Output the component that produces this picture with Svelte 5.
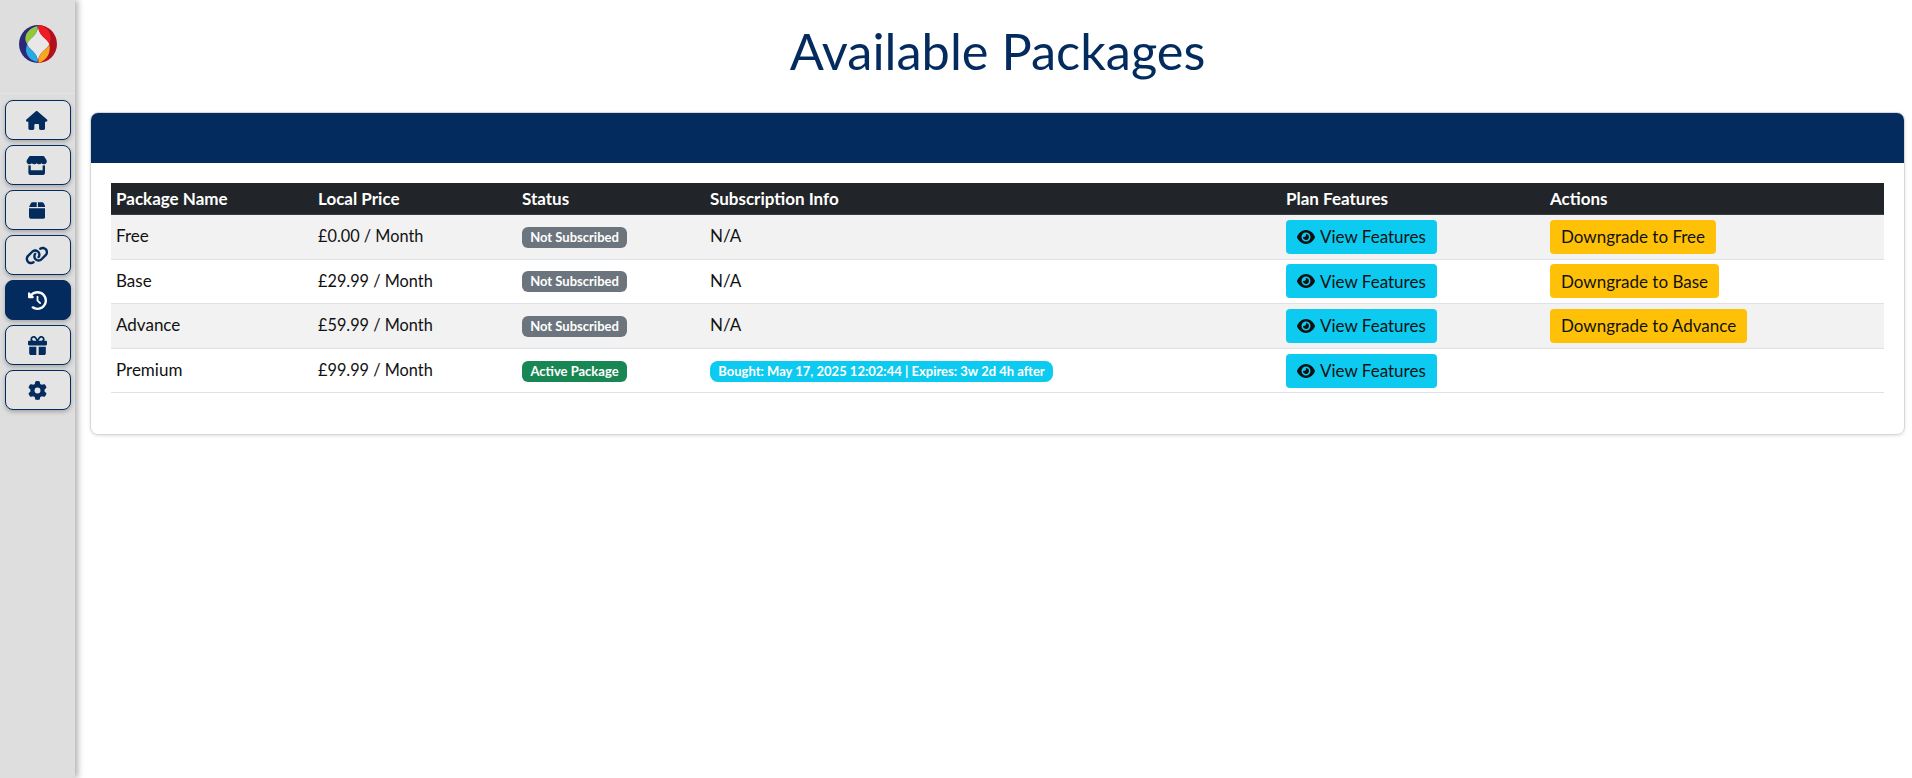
<script>
  const icons = {
    house: { w: 576, d: 'M575.8 255.5c0 18-15 32.1-32 32.1h-32l.7 160.2c0 2.7-.2 5.4-.5 8.1V472c0 22.1-17.9 40-40 40H456c-1.1 0-2.2 0-3.3-.1c-1.4 .1-2.8 .1-4.2 .1H416 392c-22.1 0-40-17.9-40-40V448 384c0-17.7-14.3-32-32-32H256c-17.7 0-32 14.3-32 32v64 24c0 22.1-17.9 40-40 40H160 128.1c-1.5 0-3-.1-4.5-.2c-1.2 .1-2.4 .2-3.6 .2H104c-22.1 0-40-17.9-40-40V360c0-.9 0-1.9 .1-2.8V287.6H32c-18 0-32-14-32-32.1c0-9 3-17 10-24L266.4 8c7-7 15-8 22-8s15 2 21 7L564.8 231.5c8 7 12 15 11 24z' },
    store: { w: 576, d: 'M547.6 103.8L490.3 13.1C485.2 5 476.1 0 466.4 0H109.6C99.9 0 90.8 5 85.7 13.1L28.3 103.8c-29.6 46.8-3.4 111.9 51.9 119.4c4 .5 8.1 .8 12.1 .8c26.1 0 49.3-11.4 65.2-29c15.9 17.6 39.1 29 65.2 29c26.1 0 49.3-11.4 65.2-29c15.9 17.6 39.1 29 65.2 29c26.2 0 49.3-11.4 65.2-29c16 17.6 39.1 29 65.2 29c4.1 0 8.1-.3 12.1-.8c55.5-7.4 81.8-72.5 52.1-119.4zM499.7 254.9l-.1 0c-5.3 .7-10.7 1.1-16.2 1.1c-12.4 0-24.3-1.9-35.4-5.3V384H128V250.6c-11.2 3.5-23.2 5.4-35.6 5.4c-5.5 0-11-.4-16.3-1.1l-.1 0c-4.1-.6-8.1-1.3-12-2.3V384v64c0 35.3 28.7 64 64 64H448c35.3 0 64-28.7 64-64V384 252.6c-4 1-8 1.8-12.3 2.3z' },
    box: { w: 448, d: 'M50.7 58.5L0 160H208V32H93.7C75.5 32 58.9 42.3 50.7 58.5zM240 160H448L397.3 58.5C389.1 42.3 372.5 32 354.3 32H240V160zm208 32H0V416c0 35.3 28.7 64 64 64H384c35.3 0 64-28.7 64-64V192z' },
    link: { w: 640, d: 'M579.8 267.7c56.5-56.5 56.5-148 0-204.5c-50-50-128.8-56.5-186.3-15.4l-1.6 1.1c-14.4 10.3-17.7 30.3-7.4 44.6s30.3 17.7 44.6 7.4l1.6-1.1c32.1-22.9 76-19.3 103.8 8.6c31.5 31.5 31.5 82.5 0 114L422.3 334.8c-31.5 31.5-82.5 31.5-114 0c-27.9-27.9-31.5-71.8-8.6-103.8l1.1-1.6c10.3-14.4 6.9-34.4-7.4-44.6s-34.4-6.9-44.6 7.4l-1.1 1.6C206.5 251.2 213 330 263 380c56.5 56.5 148 56.5 204.5 0L579.8 267.7zM60.2 244.3c-56.5 56.5-56.5 148 0 204.5c50 50 128.8 56.5 186.3 15.4l1.6-1.1c14.4-10.3 17.7-30.3 7.4-44.6s-30.3-17.7-44.6-7.4l-1.6 1.1c-32.1 22.9-76 19.3-103.8-8.6C74 372 74 321 105.5 289.5L217.7 177.2c31.5-31.5 82.5-31.5 114 0c27.9 27.9 31.5 71.8 8.6 103.9l-1.1 1.6c-10.3 14.4-6.9 34.4 7.4 44.6s34.4 6.9 44.6-7.4l1.1-1.6C433.5 260.8 427 182 377 132c-56.5-56.5-148-56.5-204.5 0L60.2 244.3z' },
    history: { w: 512, d: 'M75 75L41 41C25.9 25.9 0 36.6 0 57.9V168c0 13.3 10.7 24 24 24H134.1c21.4 0 32.1-25.9 17-41l-30.8-30.8C155 85.5 203 64 256 64c106 0 192 86 192 192s-86 192-192 192c-40.8 0-78.6-12.7-109.7-34.4c-14.5-10.1-34.4-6.6-44.6 7.9s-6.6 34.4 7.9 44.6C151.2 495 201.7 512 256 512c141.4 0 256-114.6 256-256S397.4 0 256 0C185.3 0 121.3 28.7 75 75zm181 53c-13.3 0-24 10.7-24 24V256c0 6.4 2.5 12.5 7 17l72 72c9.4 9.4 24.6 9.4 33.9 0s9.4-24.6 0-33.9l-65-65V152c0-13.3-10.7-24-24-24z' },
    gift: { w: 512, d: 'M190.5 68.8L225.3 128H224 152c-22.1 0-40-17.9-40-40s17.9-40 40-40h2.2c14.9 0 28.8 7.9 36.3 20.8zM64 88c0 14.4 3.5 28 9.6 40H32c-17.7 0-32 14.3-32 32v64c0 17.7 14.3 32 32 32H480c17.7 0 32-14.3 32-32V160c0-17.7-14.3-32-32-32H438.4c6.1-12 9.6-25.6 9.6-40c0-48.6-39.4-88-88-88h-2.2c-31.9 0-61.5 16.9-77.7 44.4L256 85.5l-24.1-41C215.7 16.9 186.1 0 154.2 0H152C103.4 0 64 39.4 64 88zm336 0c0 22.1-17.9 40-40 40H288h-1.3l34.8-59.2C329.1 55.9 342.9 48 357.8 48H360c22.1 0 40 17.9 40 40zM32 288V464c0 26.5 21.5 48 48 48H224V288H32zM288 512H432c26.5 0 48-21.5 48-48V288H288V512z' },
    gear: { w: 512, d: 'M495.9 166.6c3.2 8.7 .5 18.4-6.4 24.6l-43.3 39.4c1.1 8.3 1.7 16.8 1.7 25.4s-.6 17.1-1.7 25.4l43.3 39.4c6.9 6.2 9.6 15.9 6.4 24.6c-4.4 11.9-9.7 23.3-15.8 34.3l-4.7 8.1c-6.6 11-14 21.4-22.1 31.2c-5.9 7.2-15.7 9.6-24.5 6.8l-55.7-17.7c-13.4 10.3-28.2 18.9-44 25.4l-12.5 57.1c-2 9.1-9 16.3-18.2 17.8c-13.8 2.3-28 3.5-42.5 3.5s-28.7-1.2-42.5-3.5c-9.2-1.5-16.2-8.7-18.2-17.8l-12.5-57.1c-15.8-6.5-30.6-15.1-44-25.4L83.1 425.9c-8.8 2.8-18.6 .3-24.5-6.8c-8.1-9.8-15.5-20.2-22.1-31.2l-4.7-8.1c-6.1-11-11.4-22.4-15.8-34.3c-3.2-8.7-.5-18.4 6.4-24.6l43.3-39.4C64.6 273.1 64 264.6 64 256s.6-17.1 1.7-25.4L22.4 191.2c-6.9-6.2-9.6-15.9-6.4-24.6c4.4-11.9 9.7-23.3 15.8-34.3l4.7-8.1c6.6-11 14-21.4 22.1-31.2c5.9-7.2 15.7-9.6 24.5-6.8l55.7 17.7c13.4-10.3 28.2-18.9 44-25.4l12.5-57.1c2-9.1 9-16.3 18.2-17.8C227.3 1.2 241.5 0 256 0s28.7 1.2 42.5 3.5c9.2 1.5 16.2 8.7 18.2 17.8l12.5 57.1c15.8 6.5 30.6 15.1 44 25.4l55.7-17.7c8.8-2.8 18.6-.3 24.5 6.8c8.1 9.8 15.5 20.2 22.1 31.2l4.7 8.1c6.1 11 11.4 22.4 15.8 34.3zM256 336a80 80 0 1 0 0-160 80 80 0 1 0 0 160z' },
  };
  const eye = 'M288 32c-80.8 0-145.5 36.8-192.6 80.6C48.6 156 17.3 208 2.5 243.7c-3.3 7.9-3.3 16.7 0 24.6C17.3 304 48.6 356 95.4 399.4C142.5 443.2 207.2 480 288 480s145.5-36.8 192.6-80.6c46.8-43.5 78.1-95.4 92.9-131.1c3.3-7.9 3.3-16.7 0-24.6c-14.8-35.7-46.1-87.7-92.9-131.1C433.5 68.8 368.8 32 288 32zM144 256a144 144 0 1 1 288 0 144 144 0 1 1 -288 0zm144-64c0 35.3-28.7 64-64 64c-7.1 0-13.9-1.2-20.3-3.3c-5.5-1.8-11.9 1.6-11.7 7.4c.3 6.9 1.3 13.8 3.2 20.7c13.7 51.2 66.4 81.6 117.6 67.9s81.6-66.4 67.9-117.6c-11.1-41.5-47.8-69.4-88.6-71.1c-5.8-.2-9.2 6.1-7.4 11.7c2.1 6.4 3.3 13.2 3.3 20.3z';

  const nav = ['house', 'store', 'box', 'link', 'history', 'gift', 'gear'];

  const plans = [
    { name: 'Free', price: '£0.00 / Month', action: 'Downgrade to Free' },
    { name: 'Base', price: '£29.99 / Month', action: 'Downgrade to Base' },
    { name: 'Advance', price: '£59.99 / Month', action: 'Downgrade to Advance' },
    { name: 'Premium', price: '£99.99 / Month', active: true, info: 'Bought: May 17, 2025 12:02:44 | Expires: 3w 2d 4h after' },
  ];
</script>

<div class="layout">
  <aside class="sidebar">
    <div class="brand">
      <svg width="38" height="38" viewBox="0 0 40 40" aria-label="logo">
        <defs><clipPath id="disc"><circle cx="20" cy="20" r="20"/></clipPath></defs>
        <g clip-path="url(#disc)">
          <rect width="20" height="40" fill="#2b2a78"/>
          <rect x="20" width="20" height="40" fill="#b3101e"/>
          <path d="M20 0C20 12 11 13 8.5 20C11 27 20 28 20 40C20 28 29 27 32 20C29 13 20 12 20 0Z" fill="#e8e8e8"/>
          <path d="M19.4 1C20 12 11 13 8.5 20C4 13 8 4 19.4 1Z" fill="#93c83d"/>
          <path d="M19.4 39C20 28 11 27 8.5 20.5C5 29 10 37 19.4 39Z" fill="#29abe2"/>
          <path d="M20.6 0C20 12 29 13 32 20C36 11 31 2 20.6 0Z" fill="#ed1c24"/>
          <path d="M20.6 40C20 28 29 27 32 20.5C33.5 29 30 37 20.6 40Z" fill="#f7a823"/>
        </g>
      </svg>
    </div>
    <nav class="nav">
      {#each nav as name}
        <button class="nav-btn" class:active={name === 'history'} aria-label={name}>
          <svg class="nav-icon" viewBox="0 0 {icons[name].w} 512"><path d={icons[name].d}/></svg>
        </button>
      {/each}
    </nav>
  </aside>

  <main class="content">
    <h1>Available Packages</h1>
    <section class="card">
      <div class="card-head"></div>
      <div class="card-body">
        <table>
          <colgroup>
            <col class="c1"/><col class="c2"/><col class="c3"/><col class="c4"/><col class="c5"/><col class="c6"/>
          </colgroup>
          <thead>
            <tr>
              <th>Package Name</th>
              <th>Local Price</th>
              <th>Status</th>
              <th>Subscription Info</th>
              <th>Plan Features</th>
              <th>Actions</th>
            </tr>
          </thead>
          <tbody>
            {#each plans as plan}
              <tr>
                <td>{plan.name}</td>
                <td class="price">{plan.price}</td>
                <td>
                  <span class="badge" class:success={plan.active}>{plan.active ? 'Active Package' : 'Not Subscribed'}</span>
                </td>
                <td>
                  {#if plan.info}
                    <span class="badge info">{plan.info}</span>
                  {:else}
                    N/A
                  {/if}
                </td>
                <td>
                  <button class="btn btn-info">
                    <svg class="eye" viewBox="0 0 576 512"><path d={eye}/></svg>
                    View Features
                  </button>
                </td>
                <td>
                  {#if plan.action}
                    <button class="btn btn-warning">{plan.action}</button>
                  {/if}
                </td>
              </tr>
            {/each}
          </tbody>
        </table>
      </div>
    </section>
  </main>
</div>

<style>
  :global(body) {
    background: #fff;
    font-family: Lato, "Open Sans", sans-serif;
    font-size: 17px;
    color: #111;
  }
  .layout { display: flex; min-height: 778px; }

  .sidebar {
    width: 75px; flex-shrink: 0;
    background: #dedede;
    box-shadow: 3px 0 6px rgba(0,0,0,0.3);
  }
  .brand {
    height: 94px; padding-bottom: 6px;
    box-sizing: border-box;
    display: flex; align-items: center; justify-content: center;
    border-bottom: 1px solid #e4e4ea;
  }
  .nav {
    display: flex; flex-direction: column; gap: 5px;
    padding: 6px 4px 0 5px;
  }
  .nav-btn {
    height: 40px; padding: 0;
    display: flex; align-items: center; justify-content: center;
    background: #e4e4e4;
    border: 1px solid #032b5e;
    border-radius: 8px;
    box-shadow: 0 2px 4px rgba(0,0,0,0.25);
    color: #032b5e;
  }
  .nav-btn.active { background: #032b5e; color: #fff; }
  .nav-icon { height: 19px; fill: currentColor; margin-right: 2px; }

  .content { flex: 1; min-width: 0; padding: 0 7px 0 15px; }
  h1 {
    margin: 0; height: 112px;
    padding-top: 22px; box-sizing: border-box;
    text-align: center;
    font-size: 50.5px; font-weight: 400; line-height: 58px;
    color: #032b5e;
  }

  .card {
    height: 323px; box-sizing: border-box;
    border: 1px solid #d8d8d8; border-radius: 8px;
    box-shadow: 0 1px 3px rgba(0,0,0,0.12);
    overflow: hidden;
  }
  .card-head { height: 50px; background: #032b5e; }
  .card-body { padding: 20px; }

  table { width: 100%; table-layout: fixed; border-collapse: collapse; }
  .c1 { width: 202px; }
  .c2 { width: 204px; }
  .c3 { width: 188px; }
  .c4 { width: 576px; }
  .c5 { width: 264px; }

  th {
    height: 31.5px; padding: 0 5px 1px;
    background: #212529; color: #fff;
    text-align: left; font-weight: 700;
    border-bottom: 1px solid #3a3f44;
    box-sizing: border-box;
  }
  td {
    height: 44.6px; padding: 0 5px 2px;
    box-sizing: border-box;
    border-bottom: 1px solid #dee2e6;
    vertical-align: middle;
  }
  tbody tr:nth-child(odd) td { background: #f2f2f2; }
  .price { font-size: 16.3px; }

  .badge {
    display: inline-block; box-sizing: border-box;
    min-width: 105px; height: 21px;
    padding: 0 6px;
    border-radius: 6px;
    background: #6c757d; color: #fff;
    font-size: 13px; font-weight: 700; line-height: 21px;
    text-align: center; vertical-align: middle;
    margin-top: 2px;
  }
  .badge.success { background: #198754; }
  .badge.info { background: #0dcaf0; width: 343px; border-radius: 8px; }

  .btn {
    height: 34px; padding: 0 11px;
    border: 0; border-radius: 4px;
    font: inherit; color: #111;
    display: inline-flex; align-items: center; gap: 5px;
    vertical-align: middle;
    margin-top: 2px;
  }
  .btn-info { background: #0dcaf0; }
  .btn-warning { background: #ffc107; }
  .eye { width: 18px; height: 16px; fill: #111; }
</style>
